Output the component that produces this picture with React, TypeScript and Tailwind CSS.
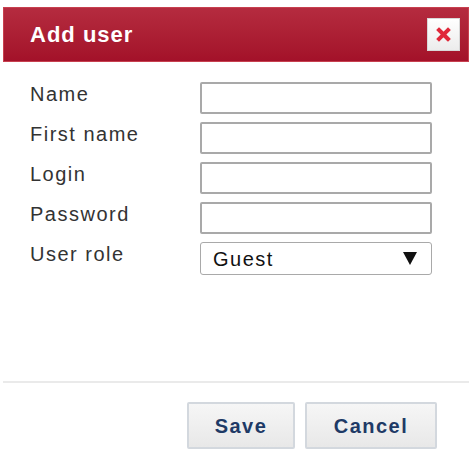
import React, { useState } from 'react';

const fields = ['Name', 'First name', 'Login', 'Password'];

const App: React.FC = () => {
    const [values, setValues] = useState<Record<string, string>>({});

    return (
        <div className="w-[472px] h-[475px] bg-white pt-[7px] px-[3px]" style={{ fontFamily: '"Liberation Sans", Arial, sans-serif' }}>
            <div className="w-[466px]">
                {/* header */}
                <div className="h-[55px] flex items-center justify-between border border-[#c8404f] bg-gradient-to-b from-[#b52b3f] to-[#a31129] pl-[26px] pr-[8px]">
                    <h1 className="text-[22px] font-bold text-white tracking-[1px]">Add user</h1>
                    <button className="w-[33px] h-[33px] flex items-center justify-center border border-[#d8d8d8] bg-gradient-to-b from-white to-[#ececec]">
                        <svg width="15" height="15" viewBox="0 0 15 15">
                            <path d="M3 3 L12 12 M12 3 L3 12" stroke="#e0283a" strokeWidth="4" strokeLinecap="square" />
                        </svg>
                    </button>
                </div>

                {/* form */}
                <div className="h-[319px] pt-[20px] pl-[27px] flex flex-col gap-[8px]">
                    {fields.map(label => (
                        <div key={label} className="flex items-start h-[32px]">
                            <label className="w-[170px] text-[20px] leading-6 text-[#333] tracking-[1.5px]">{label}</label>
                            <input
                                type={label === 'Password' ? 'password' : 'text'}
                                value={values[label] ?? ''}
                                onChange={e => setValues({ ...values, [label]: e.target.value })}
                                className="w-[232px] h-[32px] border-2 border-[#a9a9a9] rounded-[2px] bg-white px-2 outline-none"
                            />
                        </div>
                    ))}
                    <div className="flex items-start h-[33px]">
                        <label className="w-[170px] text-[20px] leading-6 text-[#333] tracking-[1.5px]">User role</label>
                        <div className="w-[232px] h-[33px] border border-[#a9a9a9] rounded-[3px] bg-white flex items-center justify-between pl-[12px] pr-[14px]">
                            <span className="text-[20px] text-[#111] tracking-[1.5px]">Guest</span>
                            <svg width="14" height="13" viewBox="0 0 14 13">
                                <polygon points="0,0 14,0 7,13" fill="#111" />
                            </svg>
                        </div>
                    </div>
                </div>

                <hr className="border-t-2 border-[#eaeaea]" />

                {/* footer */}
                <div className="flex justify-end gap-[10px] pt-[19px] pr-[32px]">
                    <button className="w-[108px] h-[47px] border-2 border-[#d3d8de] rounded-[2px] bg-gradient-to-b from-[#f6f6f6] to-[#e8e8e8] text-[20px] font-bold text-[#1e3a66] tracking-[1.5px]">Save</button>
                    <button className="w-[132px] h-[47px] border-2 border-[#d3d8de] rounded-[2px] bg-gradient-to-b from-[#f6f6f6] to-[#e8e8e8] text-[20px] font-bold text-[#1e3a66] tracking-[1.5px]">Cancel</button>
                </div>
            </div>
        </div>
    );
};

export default App;
